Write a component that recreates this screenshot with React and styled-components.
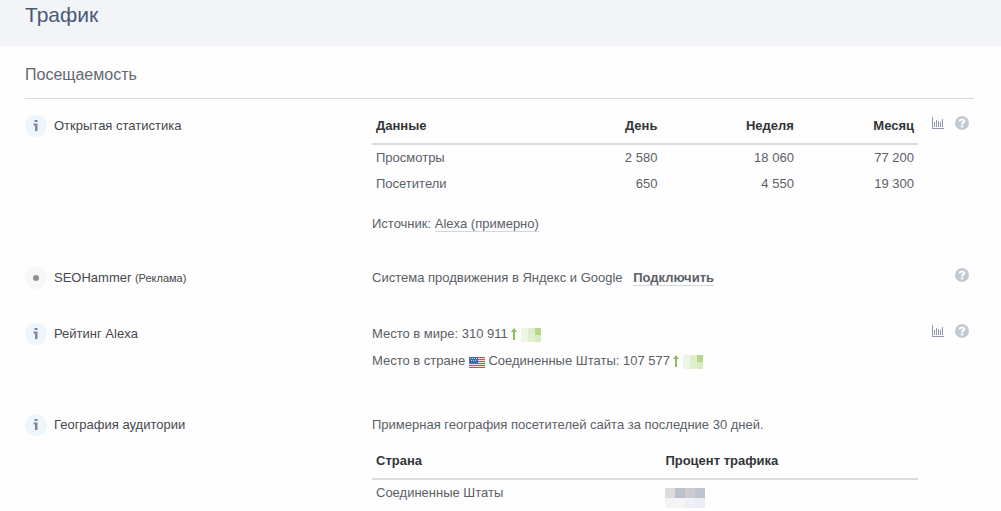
import React from 'react'
import styled, { createGlobalStyle } from 'styled-components'

const views = [
    { name: 'Просмотры', day: '2 580', week: '18 060', month: '77 200' },
    { name: 'Посетители', day: '650', week: '4 550', month: '19 300' },
]

const greenCells = ['#edf6e2', '#dcefc8', '#b5d98a', '#edf6e2', '#dff0cc', '#d6ecbd']
const grayCells = ['#dcdcde', '#bbc1ca', '#cccbd2', '#c0c4d0', '#f3f3f4', '#f5f5f7', '#eff0f4', '#ebedf2']

function InfoIcon() {
    return (
        <Round $color="#edf5fd">
            <svg width="22" height="22" viewBox="0 0 22 22" fill="#7f8794" aria-hidden="true">
                <path d="M9.500 5h3v2h-3zM8.500 8.500h4V16h-2.500v-5.500H8.500z" />
            </svg>
        </Round>
    )
}

function DotIcon() {
    return (
        <Round $color="#f7f7f7">
            <svg width="22" height="22" viewBox="0 0 22 22" aria-hidden="true">
                <circle cx="11" cy="11" r="3" fill="#8f9094" />
            </svg>
        </Round>
    )
}

function Tools({ chart, help }) {
    return (
        <ToolsWrapper>
            {chart && (
                <IconButton aria-label="График">
                    <svg width="12" height="12" viewBox="0 0 12 12" fill="#8d9bad">
                        <path d="M0 0h1v11h11v1H0zM2 5h1v5H2zM4 3h1v7H4zM6 4h1v6H6zM8 5h1v5H8zM10 2h1v8h-1z" />
                    </svg>
                </IconButton>
            )}
            {help && (
                <IconButton aria-label="Помощь">
                    <svg width="14" height="14" viewBox="0 0 14 14" fill="none">
                        <circle cx="7" cy="7" r="7" fill="#c1c9d5" />
                        <path d="M4.600 5.600C4.700 4 5.700 3.500 7 3.500c1.400 0 2.300.7 2.300 1.800C9.300 6.800 7.100 6.600 7.100 8.600" stroke="#fff" strokeWidth="2" />
                        <path d="M6 9.400h2.200v2H6z" fill="#fff" />
                    </svg>
                </IconButton>
            )}
        </ToolsWrapper>
    )
}

function Growth() {
    return (
        <>
            <Arrow width="6" height="14" viewBox="0 0 6 14" aria-hidden="true">
                <path d="M3 0L6 4H4V12H2V4H0z" fill="#8dbd5c" />
            </Arrow>
            <Mosaic width="20" height="14" viewBox="0 0 20 14" aria-hidden="true">
                {greenCells.map((color, key) => (
                    <rect key={key} x={(key % 3) * 7} y={Math.floor(key / 3) * 7} width="7" height="7" fill={color} />
                ))}
            </Mosaic>
        </>
    )
}

function UsFlag() {
    return (
        <Flag width="16" height="13" viewBox="0 0 16 13" role="img" aria-label="США">
            <path d="M0 2h16v11H0z" fill="#f4dede" />
            <path d="M0 2h16v1H0zM0 4h16v1H0zM0 6h16v1H0zM0 8h16v1H0zM0 10h16v1H0zM0 12h16v1H0z" fill="#c9524c" />
            <path d="M0 2h9v6H0z" fill="#3f69b0" />
            <path d="M1 3h1v1H1zM3 3h1v1H3zM5 3h1v1H5zM7 3h1v1H7zM2 5h1v1H2zM4 5h1v1H4zM6 5h1v1H6z" fill="#c5d3ea" />
        </Flag>
    )
}

function App() {
    return (
        <>
            <GlobalStyle />
            <Header>
                <Title>Трафик</Title>
            </Header>
            <Main>
                <Heading>Посещаемость</Heading>
                <Row $bottom={13}>
                    <Label><InfoIcon /><span>Открытая статистика</span></Label>
                    <div>
                        <Table>
                            <thead>
                                <tr>
                                    <Th $width="28%">Данные</Th>
                                    <Th $right $width="25%">День</Th>
                                    <Th $right $width="25%">Неделя</Th>
                                    <Th $right $width="22%">Месяц</Th>
                                </tr>
                            </thead>
                            <tbody>
                                {views.map((item) => (
                                    <tr key={item.name}>
                                        <Td>{item.name}</Td>
                                        <Td $right>{item.day}</Td>
                                        <Td $right>{item.week}</Td>
                                        <Td $right>{item.month}</Td>
                                    </tr>
                                ))}
                            </tbody>
                        </Table>
                        <Source>Источник: <Link href="#alexa">Alexa (примерно)</Link></Source>
                    </div>
                    <Tools chart help />
                </Row>
                <Row $bottom={15}>
                    <Label><DotIcon /><span>SEOHammer <Small>(Реклама)</Small></span></Label>
                    <Text>Система продвижения в Яндекс и Google <Connect href="#connect">Подключить</Connect></Text>
                    <Tools help />
                </Row>
                <Row $bottom={23}>
                    <Label><InfoIcon /><span>Рейтинг Alexa</span></Label>
                    <Ranks>
                        <Text>Место в мире: 310 911<Growth /></Text>
                        <Text>Место в стране <UsFlag /> Соединенные Штаты: 107 577<Growth /></Text>
                    </Ranks>
                    <Tools chart help />
                </Row>
                <Row $bottom={0} $last>
                    <Label><InfoIcon /><span>География аудитории</span></Label>
                    <Geo>
                        <Text>Примерная география посетителей сайта за последние 30 дней.</Text>
                        <Table>
                            <thead>
                                <tr>
                                    <Th $width="53%">Страна</Th>
                                    <Th>Процент трафика</Th>
                                </tr>
                            </thead>
                            <tbody>
                                <tr>
                                    <Td>Соединенные Штаты</Td>
                                    <Td>
                                        <Percent width="40" height="20" viewBox="0 0 40 20" aria-hidden="true">
                                            {grayCells.map((color, key) => (
                                                <rect key={key} x={(key % 4) * 10} y={Math.floor(key / 4) * 10} width="10" height="10" fill={color} />
                                            ))}
                                        </Percent>
                                    </Td>
                                </tr>
                            </tbody>
                        </Table>
                    </Geo>
                </Row>
            </Main>
        </>
    )
}

export default App

const GlobalStyle = createGlobalStyle`
    * {
        box-sizing: border-box;
    }
    body {
        margin: 0;
        background: #fefefe;
        color: #5b6067;
        font: 13px/26px "Liberation Sans", Arial, sans-serif;
    }
`

const Header = styled.header`
    padding: 2px 25px 18px;
    background: #f2f4f8;
`

const Title = styled.h1`
    margin: 0;
    color: #4a5a74;
    font-size: 21px;
    font-weight: normal;
    line-height: 26px;
`

const Main = styled.main`
    padding: 0 27px 0 25px;
`

const Heading = styled.h2`
    margin: 0;
    padding: 16px 0 10px;
    border-bottom: 1px solid #d9dadc;
    color: #626772;
    font-size: 16px;
    font-weight: normal;
    line-height: 26px;
`

const Row = styled.section`
    display: grid;
    grid-template-columns: 347px 1fr 56px;
    padding: 14px 0 ${(props) => props.$bottom}px;
    border-bottom: ${(props) => (props.$last ? 'none' : '1px solid #fafafa')};
`

const Label = styled.div`
    display: flex;
    align-items: center;
    align-self: start;
    gap: 7px;
    color: #45484d;
`

const Round = styled.span`
    display: flex;
    width: 22px;
    height: 22px;
    border-radius: 50%;
    background: ${(props) => props.$color};
`

const Small = styled.small`
    font-size: 11px;
`

const Text = styled.p`
    margin: 0;
`

const Source = styled.p`
    margin: 14px 0 0;
`

const Link = styled.a`
    border-bottom: 1px solid #d3d6da;
    color: inherit;
    text-decoration: none;
`

const Connect = styled(Link)`
    margin-left: 7px;
    font-weight: bold;
`

const Ranks = styled.div`
    display: grid;
    gap: 1px;
`

const Geo = styled.div`
    display: grid;
    gap: 10px;
`

const Table = styled.table`
    width: 100%;
    border-collapse: collapse;
    table-layout: fixed;
`

const Th = styled.th`
    width: ${(props) => props.$width};
    padding: 0 4px 4px;
    border-bottom: 2px solid #dadbdb;
    color: #333538;
    text-align: ${(props) => (props.$right ? 'right' : 'left')};
`

const Td = styled.td`
    padding: 0 4px;
    text-align: ${(props) => (props.$right ? 'right' : 'left')};
    vertical-align: top;
`

const ToolsWrapper = styled.div`
    display: flex;
    align-items: center;
    align-self: start;
    justify-content: flex-end;
    gap: 11px;
    height: 20px;
    padding-right: 5px;
`

const IconButton = styled.button`
    display: flex;
    padding: 0;
    border: 0;
    background: none;
    cursor: pointer;
`

const Arrow = styled.svg`
    margin: 0 4px 0 3px;
    vertical-align: middle;
`

const Mosaic = styled.svg`
    vertical-align: middle;
`

const Flag = styled.svg`
    vertical-align: middle;
`

const Percent = styled.svg`
    display: block;
    margin-top: 8px;
`
